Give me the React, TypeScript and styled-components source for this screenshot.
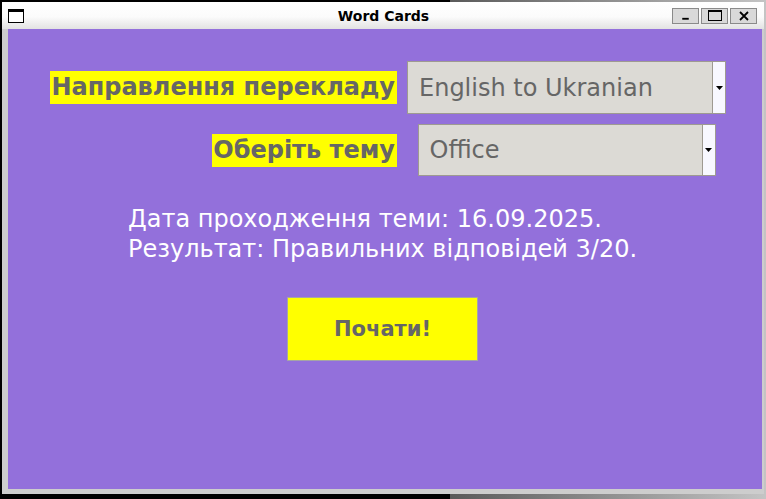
import React from "react";
import styled, { createGlobalStyle } from "styled-components";

const Global = createGlobalStyle`
  html, body { margin: 0; padding: 0; }
  body {
    width: 766px;
    height: 499px;
    overflow: hidden;
    background: linear-gradient(90deg, #000 0, #000 450px, #5a5a5a 450px, #c4c4c4 766px);
    font-family: "DejaVu Sans", "Liberation Sans", sans-serif;
  }
`;

const Window = styled.div`
  margin: 2px 0 0 2px;
  width: 762px;
  height: 492px;
  display: flex;
  flex-direction: column;
  background: #cdcdcd;
`;

const TitleBar = styled.div`
  height: 27px;
  flex: none;
  display: flex;
  align-items: center;
  padding: 0 7px 0 6px;
  background: linear-gradient(180deg, #ffffff 0%, #fbfbfb 55%, #e2e2e2 100%);
  box-sizing: border-box;
`;

const AppIcon = styled.div`
  width: 16px;
  height: 14px;
  box-sizing: border-box;
  border: 1px solid #000;
  border-top-width: 3px;
  background: #fff;
  flex: none;
`;

const Title = styled.div`
  flex: 1;
  text-align: center;
  font-weight: bold;
  font-size: 14px;
  color: #000;
  padding-left: 71px;
`;

const Buttons = styled.div`
  display: flex;
  gap: 2px;
`;

const WinButton = styled.div`
  width: 27px;
  height: 16px;
  box-sizing: border-box;
  border: 1px solid #8a8a8a;
  background: #d9d9d9;
  display: flex;
  align-items: center;
  justify-content: center;
`;

const Frame = styled.div`
  flex: 1;
  display: flex;
  padding: 0 2px 5px 6px;
`;

const Content = styled.div`
  flex: 1;
  background: #9370db;
  display: flex;
  flex-direction: column;
  padding-right: 5px;
`;

const FormGrid = styled.div`
  display: grid;
  grid-template-columns: 389px 339px;
  grid-template-rows: 53px 52px;
  row-gap: 10px;
  padding-top: 32px;
  align-items: center;
`;

const Label = styled.div`
  justify-self: end;
  background: #ffff00;
  color: #666666;
  font-weight: bold;
  font-size: 24px;
  line-height: 33px;
  height: 33px;
  padding: 0 2px 0 1px;
`;

const Combo = styled.div<{ $w: number; $h: number }>`
  justify-self: center;
  width: ${(p) => p.$w}px;
  height: ${(p) => p.$h}px;
  display: flex;
  box-sizing: border-box;
  border: 1px solid #9e9a91;
  background: #dcdad5;
`;

const ComboText = styled.div`
  flex: 1;
  display: flex;
  align-items: center;
  padding-left: 11px;
  font-size: 24px;
  color: #666666;
  border-right: 1px solid #9e9a91;
`;

const ComboArrow = styled.div`
  width: 12px;
  flex: none;
  background: #f8f8ff;
  display: flex;
  align-items: center;
  justify-content: center;
`;

const InfoWrap = styled.div`
  display: flex;
  justify-content: center;
  margin-top: 28px;
`;

const Info = styled.div`
  color: #ffffff;
  font-size: 24px;
  line-height: 30px;
  text-align: left;
  white-space: pre;
`;

const StartButton = styled.div`
  align-self: center;
  margin-top: 33px;
  width: 191px;
  height: 64px;
  box-sizing: border-box;
  border: 1px solid #a5a5a5;
  background: #ffff00;
  color: #666666;
  font-weight: bold;
  font-size: 21px;
  display: flex;
  align-items: center;
  justify-content: center;
`;

const Arrow = () => (
  <svg width="7" height="4" viewBox="0 0 7 4">
    <path d="M0 0H7L3.5 4Z" fill="#000" />
  </svg>
);

export default function App() {
  return (
    <>
      <Global />
      <Window>
        <TitleBar>
          <AppIcon />
          <Title>Word Cards</Title>
          <Buttons>
            <WinButton>
              <svg width="27" height="16" viewBox="0 0 27 16">
                <rect x="10" y="10" width="7" height="2" fill="#000" />
              </svg>
            </WinButton>
            <WinButton>
              <svg width="14" height="11" viewBox="0 0 14 11">
                <rect x="0.5" y="0.5" width="13" height="10" fill="none" stroke="#000" />
                <rect x="0" y="0" width="14" height="2" fill="#000" />
              </svg>
            </WinButton>
            <WinButton>
              <svg width="10" height="10" viewBox="0 0 10 10">
                <path d="M1 1L9 9M9 1L1 9" stroke="#000" strokeWidth="1.8" />
              </svg>
            </WinButton>
          </Buttons>
        </TitleBar>
        <Frame>
          <Content>
            <FormGrid>
              <Label>Направлення перекладу</Label>
              <Combo $w={319} $h={53}>
                <ComboText>English to Ukranian</ComboText>
                <ComboArrow>
                  <Arrow />
                </ComboArrow>
              </Combo>
              <Label>Оберіть тему</Label>
              <Combo $w={298} $h={52}>
                <ComboText>Office</ComboText>
                <ComboArrow>
                  <Arrow />
                </ComboArrow>
              </Combo>
            </FormGrid>
            <InfoWrap>
              <Info>
                {"Дата проходження теми: 16.09.2025.\nРезультат: Правильних відповідей 3/20."}
              </Info>
            </InfoWrap>
            <StartButton>Почати!</StartButton>
          </Content>
        </Frame>
      </Window>
    </>
  );
}
